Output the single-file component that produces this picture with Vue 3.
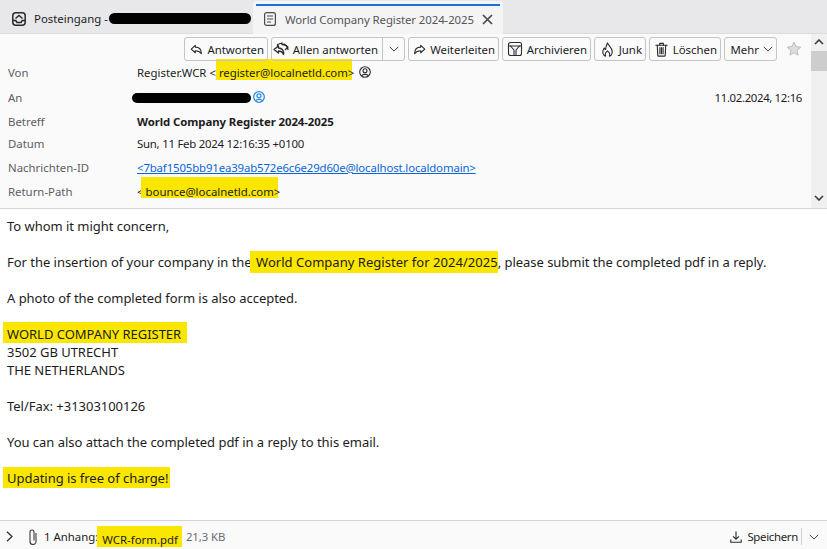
<template>
  <div class="window">
    <div class="tabbar">
      <div class="tab">
        <svg class="tab-icon" viewBox="0 0 14 14" fill="none" stroke="#2b2b2f" stroke-width="1.5">
          <rect x="0.8" y="0.8" width="12.4" height="12.4" rx="3" />
          <path d="M0.8 8.500h3l1.200 2h4l1.200-2h3M3.500 6.500L7 3.500l3.500 3" />
        </svg>
        <span class="tab-title">Posteingang -</span>
        <span class="redact tab-redact"></span>
      </div>
      <div class="tab active">
        <svg class="doc-icon" viewBox="0 0 12 14" fill="none" stroke="#4a4a4f" stroke-width="1.2">
          <rect x="0.600" y="0.600" width="10.800" height="12.800" rx="2" />
          <path d="M3 4h6M3 7h6M3 10h4" />
        </svg>
        <span class="tab-title">World Company Register 2024-2025</span>
        <svg class="tab-close" viewBox="0 0 11 11" stroke="#4a4a4f" stroke-width="1.700">
          <path d="M1 1l9 9M10 1l-9 9" />
        </svg>
      </div>
    </div>

    <div class="header">
      <div class="header-main">
        <div class="toolbar">
          <button v-for="btn in actions" :key="btn.label" class="btn" :class="btn.cls">
            <svg v-if="btn.icon" class="btn-icon" :style="{ width: btn.size + 'px', height: btn.size + 'px' }" viewBox="0 0 16 16" fill="none" stroke="#2b2b2f" :stroke-width="btn.stroke" stroke-linejoin="round" stroke-linecap="round">
              <path v-for="d in btn.icon" :key="d" :d="d" />
            </svg>
            <span>{{ btn.label }}</span>
            <span v-if="btn.split" class="split">
              <svg class="chev" viewBox="0 0 12 12" fill="none" stroke="#2b2b2f" stroke-width="1.100"><path d="M1 3.500l5 5 5-5" /></svg>
            </span>
            <svg v-if="btn.more" class="chev" viewBox="0 0 12 12" fill="none" stroke="#2b2b2f" stroke-width="1.100"><path d="M1 3.500l5 5 5-5" /></svg>
          </button>
          <svg class="star" viewBox="0 0 16 16" fill="#dddddd" stroke="#bdbdbd" stroke-width="1">
            <path d="M8 1.300l2 4.300 4.700.6-3.500 3.200.9 4.700L8 11.800l-4.100 2.300.9-4.700L1.300 6.200 6 5.600z" />
          </svg>
        </div>

        <div class="row row-von">
          <span class="label">Von</span>
          <span class="value">Register.WCR &lt;<span class="mark mark-from">register@localnetld.com&gt;</span></span>
          <svg class="contact" viewBox="0 0 12 12" fill="none" stroke="#2b2b2f" stroke-width="1.100">
            <circle cx="6" cy="6" r="5.300" />
            <circle cx="6" cy="4.800" r="2" />
            <path d="M2.600 9.700c1-1.800 5.800-1.800 6.800 0" />
          </svg>
        </div>
        <div class="row row-an">
          <span class="label">An</span>
          <span class="value to">
            <span class="redact to-redact"></span>
            <svg class="contact blue" viewBox="0 0 12 12" fill="none" stroke="#2a8de4" stroke-width="1.300">
              <circle cx="6" cy="6" r="5.300" />
              <circle cx="6" cy="4.800" r="2" />
              <path d="M2.600 9.700c1-1.800 5.800-1.800 6.800 0" />
            </svg>
          </span>
          <span class="date">11.02.2024, 12:16</span>
        </div>
        <div class="row row-betreff">
          <span class="label">Betreff</span>
          <span class="value subject">World Company Register 2024-2025</span>
        </div>
        <div class="row row-datum">
          <span class="label">Datum</span>
          <span class="value tight">Sun, 11 Feb 2024 12:16:35 +0100</span>
        </div>
        <div class="row row-id">
          <span class="label">Nachrichten-ID</span>
          <a class="value link">&lt;7baf1505bb91ea39ab572e6c6e29d60e@localhost.localdomain&gt;</a>
        </div>
        <div class="row row-path">
          <span class="label">Return-Path</span>
          <span class="value">&lt;<span class="mark mark-bounce">bounce@localnetld.com&gt;</span></span>
        </div>
      </div>
      <div class="scrollbar">
        <svg class="arrow arrow-up" viewBox="0 0 10 6" fill="none" stroke="#3a3a3a" stroke-width="1.600"><path d="M1 5l4-4 4 4" /></svg>
        <div class="thumb"></div>
        <div class="track"></div>
        <svg class="arrow arrow-down" viewBox="0 0 10 6" fill="none" stroke="#3a3a3a" stroke-width="1.600"><path d="M1 1l4 4 4-4" /></svg>
      </div>
    </div>

    <div class="message">
      <p>To whom it might concern,</p>
      <p>For the insertion of your company in the <span class="mark mark-body">World Company Register for 2024/2025</span>, please submit the completed pdf in a reply.</p>
      <p>A photo of the completed form is also accepted.</p>
      <p>
        <span class="mark mark-name">WORLD COMPANY REGISTER</span><br />
        3502 GB UTRECHT<br />
        THE NETHERLANDS
      </p>
      <p>Tel/Fax: +31303100126</p>
      <p>You can also attach the completed pdf in a reply to this email.</p>
      <p><span class="mark mark-free">Updating is free of charge!</span></p>
    </div>

    <div class="footer">
      <svg class="foot-chev" viewBox="0 0 7 11" fill="none" stroke="#2b2b2f" stroke-width="1.200"><path d="M1 .8L6 5.500 1 10.200" /></svg>
      <svg class="clip" viewBox="0 0 8 16" fill="none" stroke="#3a3a3e" stroke-width="1.100">
        <path d="M7 4v8.500a3 3 0 0 1-6 0V3a2 2 0 0 1 4 0v8.500" />
      </svg>
      <span class="count">1 Anhang:</span>
      <span class="mark mark-file">WCR-form.pdf</span>
      <span class="size">21,3 KB</span>
      <span class="save">
        <svg class="save-icon" viewBox="0 0 12 12" fill="none" stroke="#2b2b2f" stroke-width="1.100">
          <path d="M6 .5v7.500M3 5.300L6 8.200 9 5.300M.8 8.500v2.800h10.400V8.500" />
        </svg>
        <span class="save-label">Speichern</span>
        <span class="foot-line"></span>
        <svg class="chev" viewBox="0 0 12 12" fill="none" stroke="#2b2b2f" stroke-width="1.100"><path d="M1 3.500l5 5 5-5" /></svg>
      </span>
    </div>
  </div>
</template>

<script setup>
const actions = [
  { label: 'Antworten', cls: 'b-reply', size: 13, stroke: 1.4, icon: ['M6.500 3L1.500 7.500l5 4.500V9.500c3.500 0 5.500 .5 7.500 3.500 0-5-3-8-7.500-8z'] },
  {
    label: 'Allen antworten',
    cls: 'b-all',
    split: true,
    size: 16,
    stroke: 1.3,
    icon: ['M5.500 5L1 8.500 5.500 12v-2c2.500 0 4 .5 5 3.500.8-4-1.500-6.500-5-6.500z', 'M4.500 5V3.500L9 2v1.500c2.500 0 5.500 1.500 6 5', 'M11 3l4 3-2.500 2.500'],
  },
  { label: 'Weiterleiten', cls: 'b-fwd', size: 13, stroke: 1.4, icon: ['M9.500 3l5 4.500-5 4.500V9.500c-3.500 0-5.500 .5-7.500 3.500 0-5 3-8 7.500-8z'] },
  {
    label: 'Archivieren',
    cls: 'b-arch',
    size: 16,
    stroke: 1.100,
    icon: ['M3.500 1.500h9a2 2 0 0 1 2 2v9a2 2 0 0 1-2 2h-9a2 2 0 0 1-2-2v-9a2 2 0 0 1 2-2z', 'M1.500 5h13', 'M3.500 5L7 9v5.500M12.500 5L9 9v5.500'],
  },
  {
    label: 'Junk',
    cls: 'b-junk',
    size: 15,
    stroke: 1.200,
    icon: ['M8 1c.5 2.500 5 4.500 5 9.500 0 2.500-1.500 4.500-3 4.500.8-1.500.5-3.500-2-5.500-2.500 2-2.800 4-2 5.500-1.500 0-3-2-3-4.500 0-2 1-3 1.500-4 .5 1 1 1.200 1.500 1.500C6 6 7 3 8 1z'],
  },
  {
    label: 'Löschen',
    cls: 'b-del',
    size: 15,
    stroke: 1.200,
    icon: ['M2 3.500h12', 'M6 3.500V1.500h4v2', 'M3.500 3.500l.5 10.500a1 1 0 0 0 1 1h6a1 1 0 0 0 1-1l.5-10.500', 'M6.300 6v6.500M8 6v6.500M9.700 6v6.500'],
  },
  { label: 'Mehr', cls: 'b-more', more: true },
]
</script>

<style>
html,
body {
  margin: 0;
  background: #fff;
}
</style>

<style scoped>
.window {
  width: 827px;
  height: 549px;
  display: flex;
  flex-direction: column;
  overflow: hidden;
  font-family: "Noto Sans", "Open Sans", sans-serif;
  font-size: 11.4px;
  color: #1c1c1f;
}
.tabbar {
  height: 33px;
  flex: none;
  display: flex;
  padding-left: 1px;
  background: #e8e8ea;
  border-bottom: 1px solid #dcdcde;
}
.tab {
  display: flex;
  align-items: center;
  width: 252px;
  padding: 4px 0 0 11px;
  box-sizing: border-box;
  color: #222;
}
.tab.active {
  width: 250px;
  height: 33px;
  margin-top: 1px;
  padding: 3px 0 0 11px;
  background: #f4f4f5;
  border-radius: 4px 4px 0 0;
  color: #55555a;
  position: relative;
}
.tab.active::before {
  content: "";
  position: absolute;
  left: 3px;
  right: 3px;
  top: 3px;
  height: 2px;
  background: #1373d9;
}
.tab-icon {
  width: 14px;
  height: 14px;
  margin-right: 8px;
  flex: none;
}
.doc-icon {
  width: 12px;
  height: 14px;
  margin-right: 9px;
  flex: none;
}
.tab-title {
  white-space: nowrap;
}
.active .tab-title {
  letter-spacing: -0.09px;
}
.tab-close {
  width: 11px;
  height: 11px;
  margin-left: 8px;
  flex: none;
}
.redact {
  display: inline-block;
  background: #000;
  border-radius: 6px;
}
.tab-redact {
  width: 142px;
  height: 11px;
  margin-left: 1px;
}
.header {
  height: 174px;
  flex: none;
  display: flex;
  background: #fafafa;
  border-bottom: 1px solid #d4d4d4;
}
.header-main {
  flex: 1;
  min-width: 0;
}
.toolbar {
  display: flex;
  justify-content: flex-end;
  align-items: center;
  gap: 3px;
  height: 24px;
  padding-top: 3px;
  padding-right: 9px;
  position: relative;
  z-index: 1;
}
.btn {
  display: flex;
  align-items: center;
  justify-content: flex-end;
  height: 24px;
  padding: 0 3px 0 0;
  gap: 4px;
  font: inherit;
  color: #1c1c1f;
  background: transparent;
  border: 1px solid #c4c4c6;
  border-radius: 3px;
  white-space: nowrap;
  box-sizing: border-box;
}
.b-reply { width: 84px; }
.b-all { width: 134px; padding-right: 0; }
.b-fwd { width: 91px; }
.b-arch { width: 89px; }
.b-junk { width: 52px; }
.b-del { width: 72px; }
.b-more { width: 53px; }
.btn-icon {
  flex: none;
}
.split {
  width: 22px;
  height: 100%;
  display: flex;
  align-items: center;
  justify-content: center;
  border-left: 1px solid #c4c4c6;
  box-sizing: border-box;
}
.chev {
  width: 10px;
  height: 10px;
  flex: none;
}
.star {
  width: 16px;
  height: 16px;
  margin-left: 6px;
}
.row {
  display: flex;
  align-items: center;
  padding-left: 8px;
  white-space: nowrap;
}
.row-von { height: 22px; }
.row-an { height: 28px; }
.row-betreff { height: 20px; }
.row-datum { height: 24px; }
.row-id { height: 24px; }
.row-path { height: 24px; }
.label {
  width: 129px;
  flex: none;
  color: #5d5d62;
}
.value {
  color: #1c1c1f;
}
.subject {
  font-weight: 700;
  letter-spacing: -0.08px;
}
.tight {
  letter-spacing: -0.24px;
}
.link {
  color: #0a64d8;
  text-decoration: underline;
  letter-spacing: -0.14px;
}
.to {
  display: flex;
  align-items: center;
  margin-left: -5px;
}
.to-redact {
  width: 119px;
  height: 10px;
  margin-top: 2px;
}
.contact {
  width: 12px;
  height: 12px;
  margin-left: 5px;
  flex: none;
}
.contact.blue {
  margin-left: 2px;
}
.date {
  margin-left: auto;
  margin-right: 9px;
  letter-spacing: -0.35px;
}
.mark {
  background: #fbe600;
}
.mark-from,
.mark-bounce {
  background: linear-gradient(#fbe600, #fbe600) no-repeat 0 0 / calc(100% - 2px) 21px;
}
.mark-from {
  padding: 6px 0 0 3px;
  letter-spacing: -0.05px;
}
.mark-bounce {
  padding: 7px 0 0 5px;
  margin-left: -3px;
}
.scrollbar {
  width: 16px;
  flex: none;
  display: flex;
  flex-direction: column;
  align-items: center;
  background: #f0f0f0;
}
.arrow {
  width: 10px;
  height: 6px;
  flex: none;
}
.arrow-up {
  margin: 5px 0 6px;
}
.arrow-down {
  margin-bottom: 7px;
}
.thumb {
  width: 100%;
  height: 20px;
  background: #cdcdcd;
}
.track {
  flex: 1;
}
.message {
  flex: 1;
  min-height: 0;
  padding: 8px 7px;
  background: #fff;
  font-size: 13px;
  line-height: 18px;
  letter-spacing: -0.03px;
  color: #1c1c1c;
}
.message p {
  margin: 0 0 18px;
}
.mark-body {
  padding: 2px 0 2px 6px;
  margin-left: -5px;
  letter-spacing: 0.03px;
}
.mark-name {
  padding: 3px 6px 0 4px;
  margin-left: -4px;
}
.mark-free {
  padding: 2px 2px 1px 4px;
  margin-left: -4px;
}
.footer {
  height: 28px;
  flex: none;
  display: flex;
  align-items: center;
  background: #fafafa;
  border-top: 1px solid #d4d4d4;
}
.foot-chev {
  width: 7px;
  height: 11px;
  margin: 3px 0 0 6px;
  flex: none;
}
.clip {
  width: 8px;
  height: 16px;
  margin: 3px 0 0 16px;
  flex: none;
}
.count {
  margin: 3px 0 0 7px;
}
.mark-file {
  margin: 3px 0 0 -1px;
  padding: 6px 4px 0 5px;
}
.size {
  margin: 3px 0 0 4px;
  color: #6b6b70;
  letter-spacing: -0.1px;
}
.save {
  margin-left: auto;
  display: flex;
  align-items: center;
  padding: 3px 8px 0 0;
}
.save-icon {
  width: 12px;
  height: 12px;
  margin-right: 5px;
}
.save-label {
  letter-spacing: -0.3px;
}
.foot-line {
  width: 1px;
  height: 17px;
  margin: 0 7px 0 3px;
  background: #cfcfcf;
}
</style>
